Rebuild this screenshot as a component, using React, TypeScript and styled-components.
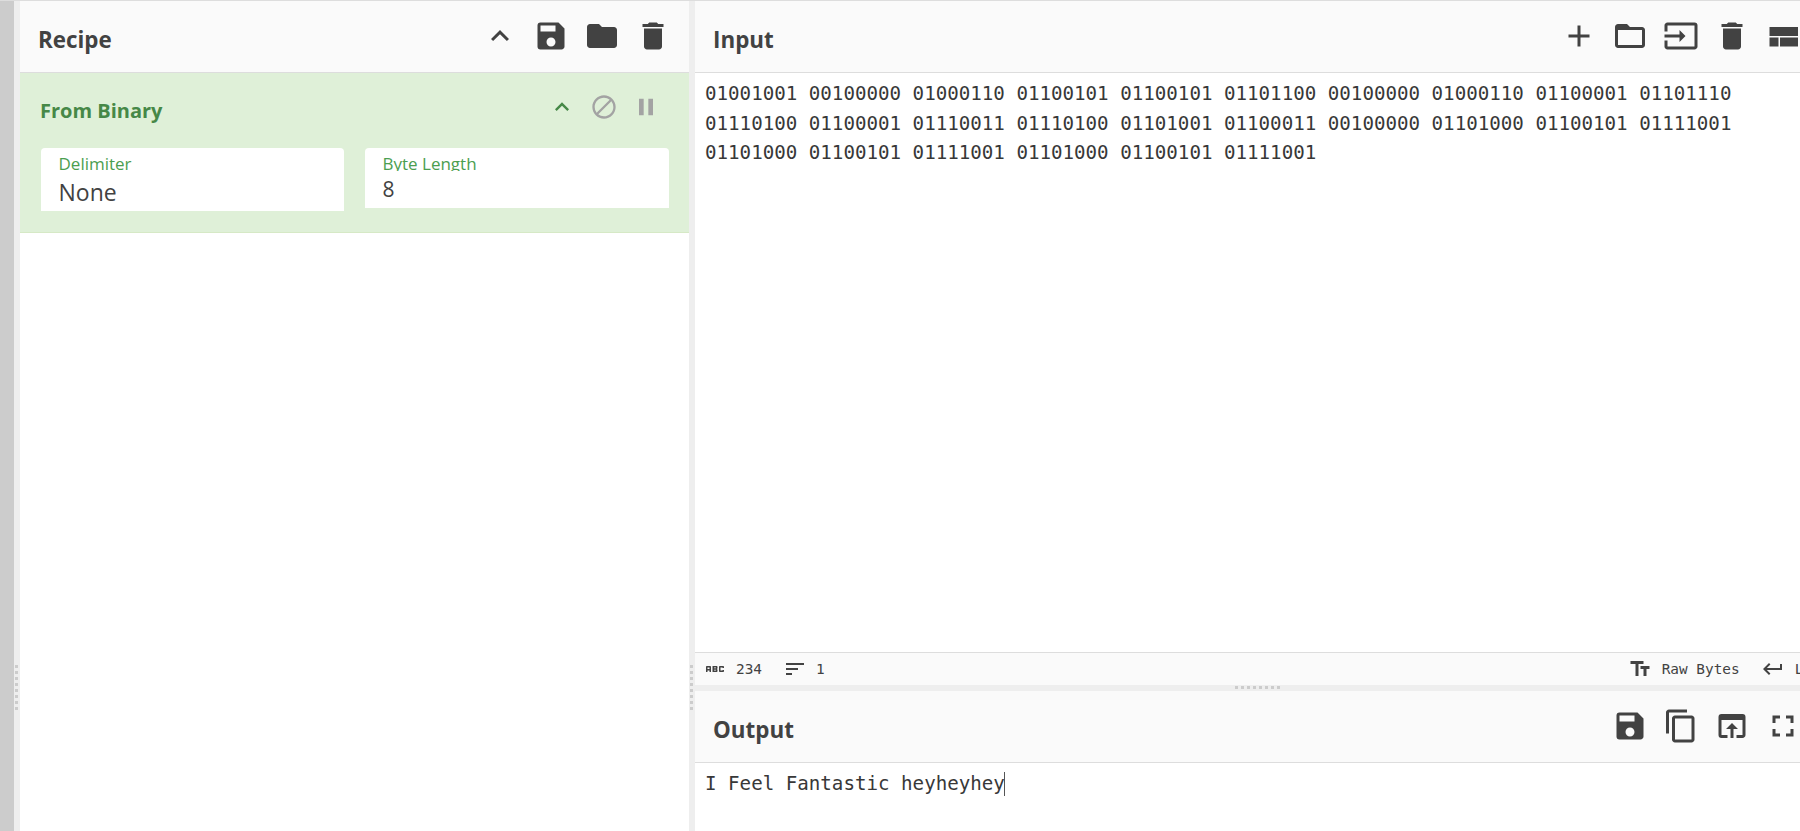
import React from 'react';
import styled, { createGlobalStyle } from 'styled-components';
import {
  MdAbc,
  MdAdd,
  MdBlock,
  MdContentCopy,
  MdDelete,
  MdFolder,
  MdFolderOpen,
  MdFullscreen,
  MdInput,
  MdKeyboardArrowUp,
  MdKeyboardReturn,
  MdOpenInBrowser,
  MdPause,
  MdSave,
  MdSort,
  MdTextFields,
} from 'react-icons/md';

const GlobalStyle = createGlobalStyle`
  html, body {
    margin: 0;
    padding: 0;
    height: 100%;
    overflow: hidden;
    background: #fff;
  }
  #root {
    height: 100%;
  }
`;

const Page = styled.div`
  display: flex;
  width: 1800px;
  height: 831px;
  overflow: hidden;
  border-top: 1px solid #ddd;
  box-sizing: border-box;
  font-family: 'Open Sans', 'Noto Sans', sans-serif;
  color: #424242;
`;

const Strip = styled.div`
  width: 14px;
  flex: none;
  background: #ccc;
`;

const Gutter = styled.div`
  position: relative;
  width: 6px;
  flex: none;
  background: #eee;
`;

const GripColumn = styled.div`
  position: absolute;
  left: 1px;
  top: 664px;
  display: flex;
  flex-direction: column;
  gap: 3px;
`;

const GripRow = styled.div`
  position: absolute;
  left: 50%;
  top: 1px;
  margin-left: -13px;
  display: flex;
  gap: 3px;
`;

const GripDot = styled.span`
  display: block;
  width: 3px;
  height: 3px;
  background: #ccc;
`;

const RecipePanel = styled.section`
  width: 669px;
  flex: none;
  display: flex;
  flex-direction: column;
`;

const IoPanel = styled.section`
  flex: 1;
  min-width: 0;
  display: flex;
  flex-direction: column;
  overflow: hidden;
`;

const Header = styled.header`
  height: 71px;
  flex: none;
  display: flex;
  align-items: center;
  justify-content: space-between;
  padding-left: 18px;
  background: #fafafa;
  border-bottom: 1px solid #ddd;
`;

const Title = styled.h2`
  margin: 7px 0 0;
  font-size: 22.4px;
  font-weight: 700;
  line-height: 1;
  color: #424242;
`;

const Tools = styled.div<{ $right: number }>`
  display: flex;
  align-items: center;
  gap: 15px;
  margin-right: ${(p) => p.$right}px;
  flex: none;
  transform: translateY(-1px);

  svg {
    display: block;
    width: 36px;
    height: 36px;
    color: #424242;
  }
`;

const Operation = styled.div`
  height: 159px;
  flex: none;
  padding: 0 20px 0 21px;
  background: #dff0d8;
  border-bottom: 1px solid #d6e9c6;
  color: #468847;
`;

const OperationHead = styled.div`
  height: 75px;
  display: flex;
  align-items: center;
  justify-content: space-between;
`;

const OperationTitle = styled.div`
  margin-left: -1px;
  font-size: 20px;
  font-weight: 700;
  line-height: 1;
`;

const OperationTools = styled.div`
  display: flex;
  align-items: center;
  gap: 14px;
  margin-right: 9px;
  transform: translateY(-4px);

  svg {
    display: block;
    width: 28px;
    height: 28px;
  }
`;

const Muted = styled.span`
  display: block;
  color: #a3a3a3;
`;

const Fields = styled.div`
  display: flex;
  gap: 21px;
  align-items: flex-start;
`;

const Field = styled.div<{ $height: number }>`
  flex: 1;
  height: ${(p) => p.$height}px;
  overflow: hidden;
  box-sizing: border-box;
  padding: 6px 18px 0 17.5px;
  background: #fff;
  border-radius: 4px 4px 0 0;

  &:first-child {
    flex: 0 0 303px;
  }
`;

const FieldLabel = styled.div`
  font-size: 17px;
  line-height: 19px;
  color: #4b9e50;
`;

const FieldValue = styled.div<{ $size: number; $pull: number }>`
  position: relative;
  font-size: ${(p) => p.$size}px;
  line-height: 36px;
  color: #424242;
  background: #fff;
  margin-top: ${(p) => p.$pull}px;
`;

const Editor = styled.div`
  flex: 1;
  min-height: 0;
  padding: 6px 10px 0 10px;
  font-family: 'DejaVu Sans Mono', monospace;
  font-size: 19.17px;
  line-height: 29.5px;
  color: #383838;
  background: #fff;
`;

const StatusBar = styled.div`
  height: 32px;
  flex: none;
  display: flex;
  align-items: center;
  justify-content: space-between;
  background: #fafafa;
  border-top: 1px solid #ddd;
  padding-left: 8px;
  font-family: 'DejaVu Sans Mono', monospace;
  font-size: 14.4px;
  color: #424242;
  white-space: nowrap;
`;

const StatusGroup = styled.div<{ $gap: number; $right?: number }>`
  display: flex;
  align-items: center;
  gap: ${(p) => p.$gap}px;
  flex: none;
  margin-right: ${(p) => p.$right ?? 0}px;
`;

const StatusIcon = styled.span<{ $gap?: number }>`
  display: flex;
  margin-left: ${(p) => p.$gap ?? 0}px;

  svg {
    display: block;
    width: 24px;
    height: 24px;
  }
`;

const HorizontalGutter = styled.div`
  position: relative;
  height: 6px;
  flex: none;
  background: #eee;
`;

const OutputArea = styled(Editor)`
  flex: none;
  height: 68px;
  box-sizing: border-box;
  padding-top: 6px;
`;

const Caret = styled.span`
  display: inline-block;
  width: 1px;
  height: 24px;
  margin-left: -1px;
  vertical-align: -6px;
  background: #555;
`;

const LayoutIcon = () => (
  <svg viewBox="0 0 24 24" fill="currentColor">
    <rect x="3" y="6" width="19" height="6" />
    <rect x="3" y="13" width="6" height="6" />
    <rect x="10" y="13" width="12" height="6" />
  </svg>
);

const Grip = ({ count }: { count: number }) => (
  <>
    {Array.from({ length: count }, (_, i) => (
      <GripDot key={i} />
    ))}
  </>
);

const INPUT =
  '01001001 00100000 01000110 01100101 01100101 01101100 00100000 01000110 01100001 01101110 01110100 01100001 01110011 01110100 01101001 01100011 00100000 01101000 01100101 01111001 01101000 01100101 01111001 01101000 01100101 01111001';

export default function App() {
  return (
    <>
      <GlobalStyle />
      <Page>
        <Strip />
        <Gutter>
          <GripColumn>
            <Grip count={8} />
          </GripColumn>
        </Gutter>
        <RecipePanel>
          <Header>
            <Title>Recipe</Title>
            <Tools $right={18}>
              <MdKeyboardArrowUp />
              <MdSave />
              <MdFolder />
              <MdDelete />
            </Tools>
          </Header>
          <Operation>
            <OperationHead>
              <OperationTitle>From Binary</OperationTitle>
              <OperationTools>
                <MdKeyboardArrowUp />
                <Muted>
                  <MdBlock />
                </Muted>
                <Muted>
                  <MdPause />
                </Muted>
              </OperationTools>
            </OperationHead>
            <Fields>
              <Field $height={63}>
                <FieldLabel>Delimiter</FieldLabel>
                <FieldValue $size={23} $pull={1}>None</FieldValue>
              </Field>
              <Field $height={60}>
                <FieldLabel>Byte Length</FieldLabel>
                <FieldValue $size={21} $pull={-2}>8</FieldValue>
              </Field>
            </Fields>
          </Operation>
        </RecipePanel>
        <Gutter>
          <GripColumn>
            <Grip count={8} />
          </GripColumn>
        </Gutter>
        <IoPanel>
          <Header>
            <Title>Input</Title>
            <Tools $right={-1}>
              <MdAdd />
              <MdFolderOpen />
              <MdInput />
              <MdDelete />
              <LayoutIcon />
            </Tools>
          </Header>
          <Editor>{INPUT}</Editor>
          <StatusBar>
            <StatusGroup $gap={9}>
              <StatusIcon>
                <MdAbc />
              </StatusIcon>
              <span>234</span>
              <StatusIcon $gap={12}>
                <MdSort />
              </StatusIcon>
              <span>1</span>
            </StatusGroup>
            <StatusGroup $gap={10} $right={-12}>
              <StatusIcon>
                <MdTextFields />
              </StatusIcon>
              <span>Raw Bytes</span>
              <StatusIcon $gap={11}>
                <MdKeyboardReturn />
              </StatusIcon>
              <span>LF</span>
            </StatusGroup>
          </StatusBar>
          <HorizontalGutter>
            <GripRow>
              <Grip count={8} />
            </GripRow>
          </HorizontalGutter>
          <Header>
            <Title>Output</Title>
            <Tools $right={-1}>
              <MdSave />
              <MdContentCopy />
              <MdOpenInBrowser />
              <MdFullscreen />
            </Tools>
          </Header>
          <OutputArea>
            I Feel Fantastic heyheyhey
            <Caret />
          </OutputArea>
        </IoPanel>
      </Page>
    </>
  );
}
